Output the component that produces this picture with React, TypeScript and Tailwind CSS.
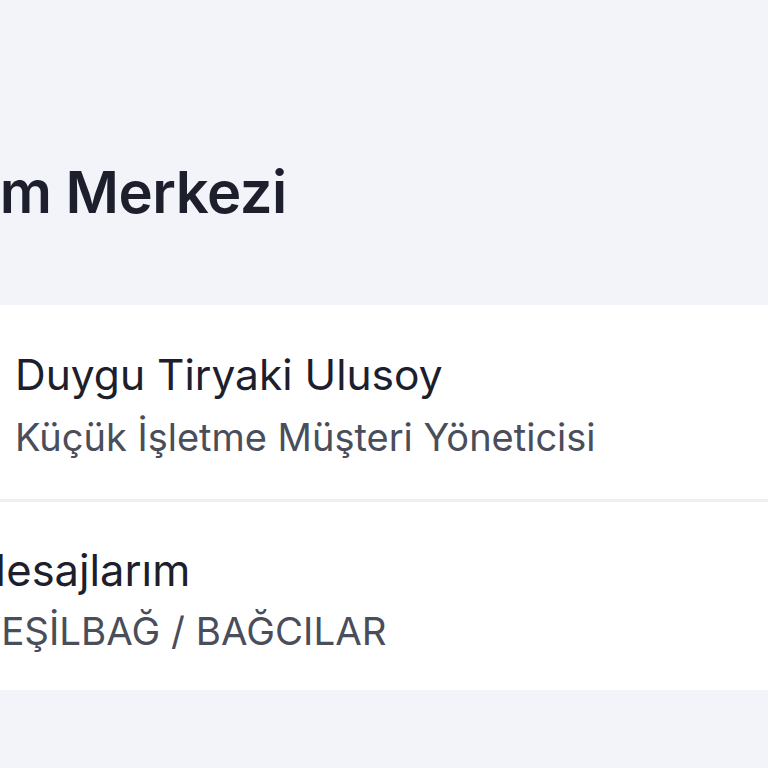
export default function App() {
  return (
    <div
      className="w-[768px] h-[768px] overflow-hidden bg-[#f3f4f9] text-[#1d202c]"
      style={{ fontFamily: 'Inter, "Noto Sans", sans-serif' }}
    >
      <div className="h-[305px] pt-[163px]">
        <h1 className="ml-[-145px] whitespace-nowrap text-[58px] font-semibold leading-none tracking-[-0.5px]">
          İletişim Merkezi
        </h1>
      </div>

      <div className="bg-white">
        <div className="h-[194px] flex flex-col gap-[12px] pt-[44px] pl-[15px]">
          <div className="text-[42.5px] leading-[52px] whitespace-nowrap">Duygu Tiryaki Ulusoy</div>
          <div className="text-[38px] leading-[48px] text-[#4a4d5a] whitespace-nowrap">
            Küçük İşletme Müşteri Yöneticisi
          </div>
        </div>
        <div className="h-[3px] bg-[#eeeff3]" />
        <div className="h-[188px] flex flex-col gap-[11px] pt-[42px]">
          <div className="ml-[-33px] text-[43.5px] leading-[52px] whitespace-nowrap">Mesajlarım</div>
          <div className="ml-[-25px] text-[38.5px] leading-[48px] text-[#4a4d5a] whitespace-nowrap">
            YEŞİLBAĞ / BAĞCILAR
          </div>
        </div>
      </div>
    </div>
  );
}
